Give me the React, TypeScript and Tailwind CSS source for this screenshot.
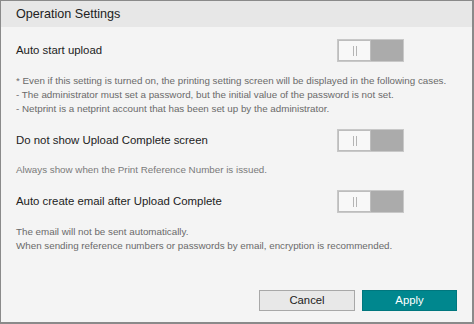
const Toggle = () => (
  <div className="flex h-[23px] w-[67px] border border-[#c8c8c8] bg-[#ababab]">
    <div className="flex h-full w-[33px] items-center justify-center gap-[2px] border border-[#bdbdbd] bg-[#f8f8f8]">
      <span className="h-[10px] w-px bg-[#b5b5b5]" />
      <span className="h-[10px] w-px bg-[#b5b5b5]" />
    </div>
  </div>
);

const SettingRow = ({ label, className }: { label: string; className: string }) => (
  <div className={`flex h-[23px] items-center justify-between pr-[68px] ${className}`}>
    <span className="text-[11.4px] text-[#222]">{label}</span>
    <Toggle />
  </div>
);

export default function App() {
  return (
    <div
      className="flex h-[324px] w-[474px] flex-col border-t border-l border-r-2 border-b-2 border-[#8a8a8a] bg-[#f4f4f4]"
      style={{ fontFamily: '"Liberation Sans", Arial, sans-serif' }}
    >
      <div className="flex h-[26px] items-center bg-[#e7e7e7] px-[15px] text-[12.6px] text-[#222]">Operation Settings</div>

      <div className="flex flex-1 flex-col pl-[15px]">
        <SettingRow label="Auto start upload" className="mt-[12px]" />
        <div className="mt-[12px] text-[9.8px] leading-[14px] text-[#6a6a6a]">
          <p>* Even if this setting is turned on, the printing setting screen will be displayed in the following cases.</p>
          <p>- The administrator must set a password, but the initial value of the password is not set.</p>
          <p>- Netprint is a netprint account that has been set up by the administrator.</p>
        </div>

        <SettingRow label="Do not show Upload Complete screen" className="mt-[13px]" />
        <p className="mt-[11px] text-[9.8px] leading-[14px] text-[#7a7a7a]">Always show when the Print Reference Number is issued.</p>

        <SettingRow label="Auto create email after Upload Complete" className="mt-[13px]" />
        <div className="mt-[12px] text-[9.8px] leading-[14px] text-[#6a6a6a]">
          <p>The email will not be sent automatically.</p>
          <p>When sending reference numbers or passwords by email, encryption is recommended.</p>
        </div>

        <div className="mt-auto mb-[11px] flex justify-end gap-[7px] pr-[15px]">
          <button className="h-[21px] w-[96px] border border-[#a8a8a8] bg-[#e8e8e8] text-[11.3px] text-[#222]">Cancel</button>
          <button className="h-[21px] w-[95px] border border-[#00777e] bg-[#00878e] text-[11.3px] text-white">Apply</button>
        </div>
      </div>
    </div>
  );
}
